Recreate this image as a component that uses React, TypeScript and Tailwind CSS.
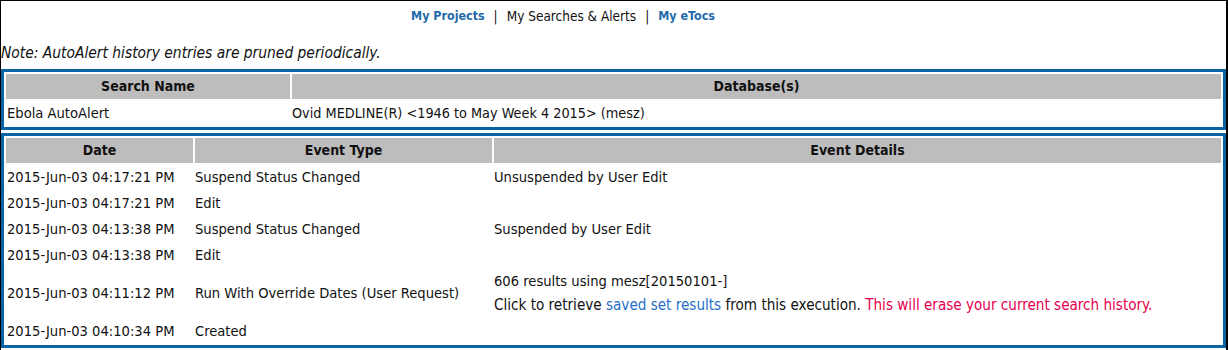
import React from 'react';

interface HistoryEvent {
  date: string;
  type: string;
  details?: React.ReactNode;
}

const events: HistoryEvent[] = [
  { date: '2015-Jun-03 04:17:21 PM', type: 'Suspend Status Changed', details: 'Unsuspended by User Edit' },
  { date: '2015-Jun-03 04:17:21 PM', type: 'Edit' },
  { date: '2015-Jun-03 04:13:38 PM', type: 'Suspend Status Changed', details: 'Suspended by User Edit' },
  { date: '2015-Jun-03 04:13:38 PM', type: 'Edit' },
  {
    date: '2015-Jun-03 04:11:12 PM',
    type: 'Run With Override Dates (User Request)',
    details: (
      <>
        <div>606 results using mesz[20150101-]</div>
        <div className="text-[15.1px]">
          Click to retrieve{' '}
          <a href="#" className="text-[#1f6fc9]">saved set results</a> from this execution.{' '}
          <span className="text-[#e5004f]">This will erase your current search history.</span>
        </div>
      </>
    ),
  },
  { date: '2015-Jun-03 04:10:34 PM', type: 'Created' },
];

const font = "font-['DejaVu_Sans_Condensed','DejaVu_Sans',sans-serif]";

const App: React.FC = () => {
  return (
    <div className={`w-[1228px] h-[350px] bg-white border-t border-l border-r-2 border-black text-[14.6px] text-[#111] ${font}`}>
      {/* Top nav */}
      <div className="h-[31px] pr-[101px] flex items-center justify-center gap-[9px] text-[13.5px]">
        <a href="#" className="font-bold text-[12.4px] text-[#1e6aaa]">My Projects</a>
        <span>|</span>
        <span>My Searches &amp; Alerts</span>
        <span>|</span>
        <a href="#" className="font-bold text-[12.4px] text-[#1e6aaa]">My eTocs</a>
      </div>

      <div className="italic text-[15.4px] leading-[20px] pt-[11px] pb-[6px]">
        Note: AutoAlert history entries are pruned periodically.
      </div>

      {/* Search info */}
      <table className="w-full table-fixed border-separate border-spacing-[2px] border-[3px] border-[#0a63a5]">
        <thead>
          <tr>
            <th className="w-[284px] h-[25px] p-0 bg-[#bdbdbd] font-bold text-[14px] text-center">Search Name</th>
            <th className="h-[25px] p-0 bg-[#bdbdbd] font-bold text-[14px] text-center">Database(s)</th>
          </tr>
        </thead>
        <tbody>
          <tr>
            <td className="h-[24px] pl-[1px] leading-[24px]">Ebola AutoAlert</td>
            <td className="h-[24px] p-0 leading-[24px] text-[14.3px]">Ovid MEDLINE(R) &lt;1946 to May Week 4 2015&gt; (mesz)</td>
          </tr>
        </tbody>
      </table>

      {/* Event history */}
      <table className="mt-[3px] w-full table-fixed border-separate border-spacing-[2px] border-[3px] border-[#0a63a5]">
        <thead>
          <tr>
            <th className="w-[187px] h-[25px] p-0 bg-[#bdbdbd] font-bold text-[14px] text-center">Date</th>
            <th className="w-[297px] h-[25px] p-0 bg-[#bdbdbd] font-bold text-[14px] text-center">Event Type</th>
            <th className="h-[25px] p-0 bg-[#bdbdbd] font-bold text-[14px] text-center">Event Details</th>
          </tr>
        </thead>
        <tbody>
          {events.map((ev, i) => (
            <tr key={i}>
              <td className="p-0 pl-[1px] leading-[24px] align-middle whitespace-nowrap">{ev.date}</td>
              <td className="p-0 leading-[24px] align-middle whitespace-nowrap">{ev.type}</td>
              <td className="p-0 leading-[24px] align-middle">{ev.details}</td>
            </tr>
          ))}
        </tbody>
      </table>
    </div>
  );
};

export default App;
